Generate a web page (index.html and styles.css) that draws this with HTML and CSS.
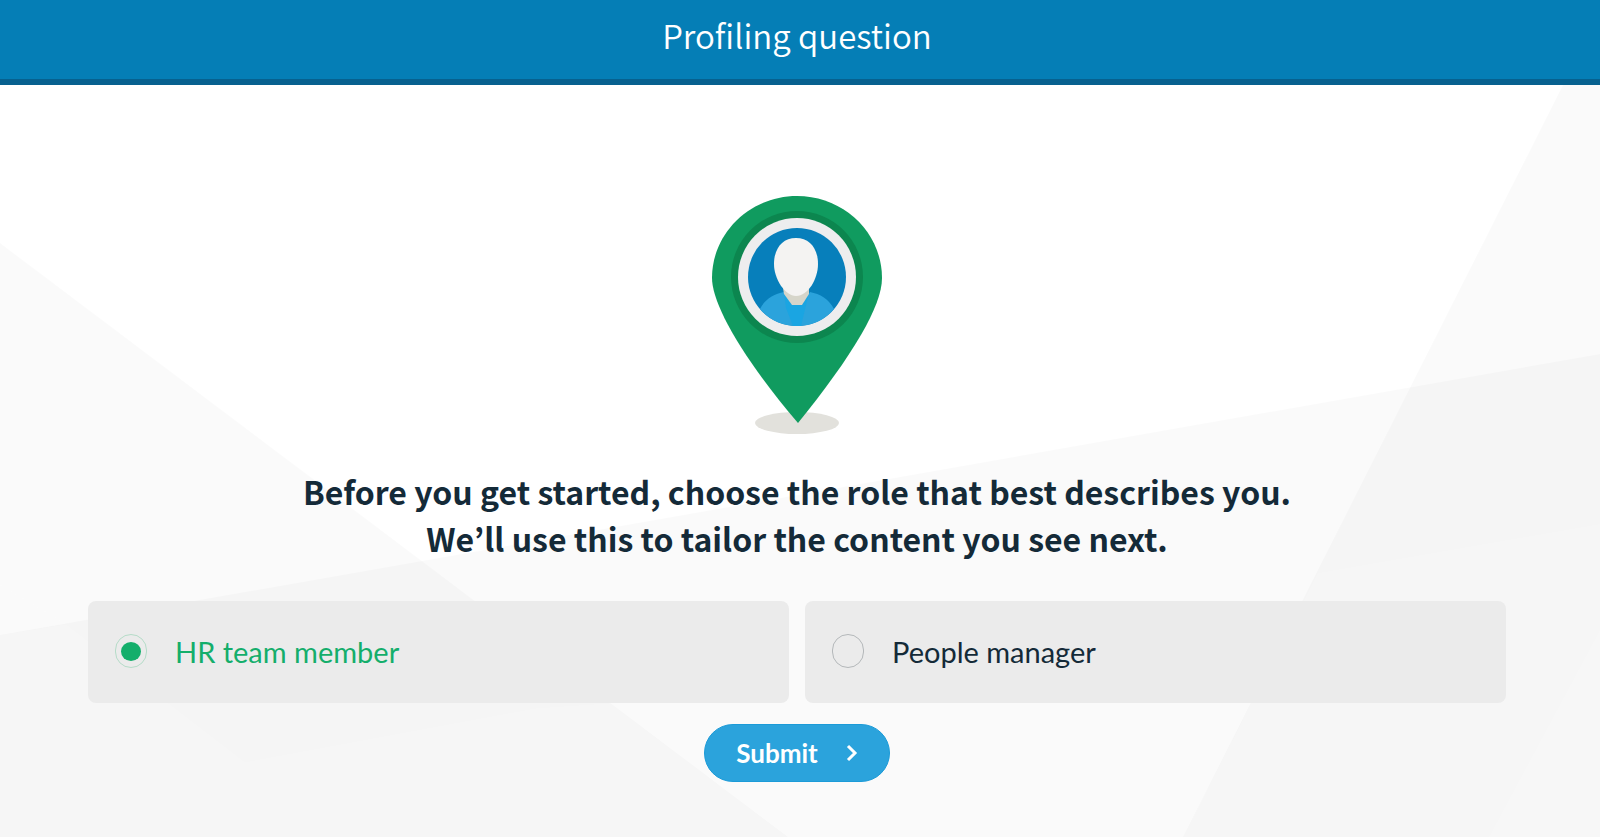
FILE: index.html
```html
<!DOCTYPE html>
<html lang="en">
<head>
    <meta charset="utf-8">
    <title>Profiling question</title>
    <link rel="stylesheet" href="styles.css">
</head>
<body>
    <header class="header">
        <h1>Profiling question</h1>
    </header>
    <main class="content">
        <!-- pale geometric backdrop -->
        <svg class="backdrop" viewBox="0 85 1600 752" preserveAspectRatio="none" aria-hidden="true">
            <g fill="#000" fill-opacity="0.02">
                <path d="M0 243L788 837H0z"/>
                <path d="M0 635L1600 354V837H0z"/>
                <path d="M1563 85H1600V837H1183z"/>
            </g>
            <g fill="#fff" fill-opacity="0.14">
                <path d="M0 585L66 624L0 635z"/>
                <path d="M1318 573L1600 524V837H1183z"/>
                <path d="M788 837L740 786L1208 705L1183 837z"/>
                <path d="M1600 630V837H1489z"/>
            </g>
            <path d="M66 624L0 635V837H788L610 703L536 708L245 762z" fill="#fff" fill-opacity="0.1"/>
        </svg>

        <svg class="pin" viewBox="20 14 174 242" aria-hidden="true">
            <ellipse cx="107" cy="243" rx="42" ry="11" fill="#e2e1dc"/>
            <path d="M107 16C60 16 22 53 22 98C22 123 50 175 108 243C163 175 192 126 192 98C192 53 154 16 107 16z" fill="#109b5f"/>
            <circle cx="107" cy="97" r="66" fill="#0c864f"/>
            <circle cx="107" cy="97" r="59" fill="#ededee"/>
            <circle cx="107" cy="97" r="49" fill="#077fbb"/>
            <path d="M70 129C75 119 84 114 94 112L102 125H112L120 112C130 114 139 119 144 129C135 140 122 146 107 146C92 146 79 140 70 129z" fill="#2ba3dc"/>
            <path d="M94 112L102 125H112L119 113L111 146H103L96 128z" fill="#1aa5e2"/>
            <path d="M93 108H119V114L112 125H102L94 114z" fill="#d6d5ca"/>
            <path d="M106 58C92 58 84 69 84 84C84 99 95 116 106 116C118 116 128 99 128 84C128 69 120 58 106 58z" fill="#f4f3f2"/>
        </svg>

        <form class="question">
            <h2>Before you get started, choose the role that best describes you.<br>We’ll use this to tailor the content you see next.</h2>
            <div class="options">
                <label class="option">
                    <input type="radio" name="role" value="hr" checked>
                    <span>HR team member</span>
                </label>
                <label class="option">
                    <input type="radio" name="role" value="manager">
                    <span>People manager</span>
                </label>
            </div>
            <button type="button" class="submit-button">
                Submit
                <svg width="12" height="18" viewBox="0 0 12 18" aria-hidden="true">
                    <path d="M2 2L9 9L2 16" fill="none" stroke="#fff" stroke-width="3"/>
                </svg>
            </button>
        </form>
    </main>
</body>
</html>
```
FILE: styles.css
```css
* {
    box-sizing: border-box;
}
body {
    margin: 0;
    min-height: 100vh;
    display: flex;
    flex-direction: column;
    background: #fff;
    color: #142a38;
    font-family: Lato, sans-serif;
}
h1, h2 {
    margin: 0;
    font-family: "Noto Sans CJK KR", sans-serif;
}
.header {
    padding: 11px 6px 20px 0;
    background: #057eb6;
    border-bottom: 6px solid #07618f;
    color: #fff;
    text-align: center;
}
h1 {
    font-size: 33px;
    font-weight: 350;
    line-height: 48px;
}
.content {
    position: relative;
    flex: 1;
    display: flex;
    flex-direction: column;
    align-items: center;
    padding: 109px 94px 54px 88px;
}
.backdrop {
    position: absolute;
    inset: 0;
    width: 100%;
    height: 100%;
}
.pin {
    position: relative;
    width: 174px;
    height: 242px;
}
.question {
    position: relative;
    width: 100%;
    margin-top: 32px;
    text-align: center;
}
h2 {
    font-size: 32px;
    font-weight: 700;
    line-height: 47px;
}
.options {
    display: grid;
    grid-template-columns: 1fr 1fr;
    gap: 16px;
    margin-top: 39px;
}
.option {
    display: flex;
    align-items: center;
    gap: 28px;
    height: 102px;
    padding: 0 27px 2px;
    background: #ebebeb;
    border-radius: 8px;
    font-size: 29px;
    cursor: pointer;
}
.option input {
    appearance: none;
    display: grid;
    place-items: center;
    width: 32px;
    height: 34px;
    margin: 0;
    border: 1px solid #b4b8ba;
    border-radius: 16px;
}
.option input:checked {
    border-color: #b5dcc8;
}
.option input:checked::before {
    content: "";
    width: 20px;
    height: 19px;
    border-radius: 50%;
    background: #14ae6b;
}
.option input:checked + span {
    color: #14ae6b;
}
.submit-button {
    display: inline-flex;
    align-items: center;
    justify-content: center;
    gap: 28px;
    width: 186px;
    height: 58px;
    margin-top: 21px;
    padding: 0;
    border: 1px solid #1c9bd8;
    border-radius: 29px;
    background: #2ba3dc;
    color: #fff;
    font-family: Lato, sans-serif;
    font-size: 26px;
    font-weight: 700;
    cursor: pointer;
}
```
